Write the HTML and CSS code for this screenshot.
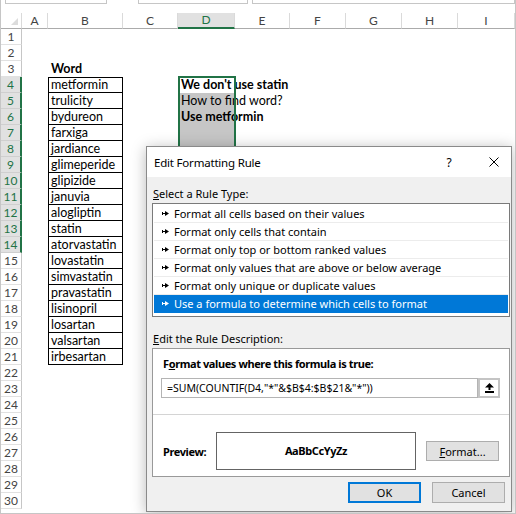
FILE: index.html
```html
<!DOCTYPE html>
<html lang="en">
  <head>
    <meta charset="UTF-8" />
    <meta name="viewport" content="width=device-width, initial-scale=1.0" />
    <link rel="stylesheet" href="styles.css">
  </head>
  <body>
    <div class="app">
      <div class="topbar">
        <div class="tb tb-1"></div>
        <div class="tb tb-2"></div>
        <div class="tb tb-3"></div>
      </div>
      <div class="sheet" id="sheet"></div>

      <!-- current selection D4:D14 -->
      <div class="selection"></div>

      <div class="dialog">
        <div class="titlebar">
          <span class="title">Edit Formatting Rule</span>
          <span class="help">?</span>
          <svg class="close" width="10" height="10" viewBox="0 0 10 10">
            <path d="M0.5 0.5L9.5 9.5M9.5 0.5L0.5 9.5" stroke="#000" stroke-width="1" fill="none" />
          </svg>
        </div>
        <div class="dlg-body">
          <div class="label"><u>S</u>elect a Rule Type:</div>
          <ul class="rule-list">
            <li><svg class="arr" width="7" height="5" viewBox="0 0 7 5"><rect x="0" y="1" width="1" height="3" /><rect x="0" y="2" width="3" height="1" /><polygon points="3,0 7,2.5 3,5" /></svg>Format all cells based on their values</li>
            <li><svg class="arr" width="7" height="5" viewBox="0 0 7 5"><rect x="0" y="1" width="1" height="3" /><rect x="0" y="2" width="3" height="1" /><polygon points="3,0 7,2.5 3,5" /></svg>Format only cells that contain</li>
            <li><svg class="arr" width="7" height="5" viewBox="0 0 7 5"><rect x="0" y="1" width="1" height="3" /><rect x="0" y="2" width="3" height="1" /><polygon points="3,0 7,2.5 3,5" /></svg>Format only top or bottom ranked values</li>
            <li><svg class="arr" width="7" height="5" viewBox="0 0 7 5"><rect x="0" y="1" width="1" height="3" /><rect x="0" y="2" width="3" height="1" /><polygon points="3,0 7,2.5 3,5" /></svg>Format only values that are above or below average</li>
            <li><svg class="arr" width="7" height="5" viewBox="0 0 7 5"><rect x="0" y="1" width="1" height="3" /><rect x="0" y="2" width="3" height="1" /><polygon points="3,0 7,2.5 3,5" /></svg>Format only unique or duplicate values</li>
            <li class="active"><svg class="arr" width="7" height="5" viewBox="0 0 7 5"><rect x="0" y="1" width="1" height="3" /><rect x="0" y="2" width="3" height="1" /><polygon points="3,0 7,2.5 3,5" /></svg>Use a formula to determine which cells to format</li>
          </ul>
          <div class="label label-desc"><u>E</u>dit the Rule Description:</div>
          <div class="desc">
            <div class="desc-title">F<u>o</u>rmat values where this formula is true:</div>
            <div class="formula-row">
              <div class="formula">=SUM(COUNTIF(D4,"*"&amp;$B$4:$B$21&amp;"*"))</div>
              <div class="collapse">
                <svg width="9" height="10" viewBox="0 0 9 10">
                  <polygon points="4.5,0 9,4.5 5.5,4.5 5.5,7 3.5,7 3.5,4.5 0,4.5" fill="#000" />
                  <rect x="0" y="8" width="9" height="2" fill="#000" />
                </svg>
              </div>
            </div>
            <div class="sep"></div>
            <div class="preview-row">
              <span class="preview-label">Preview:</span>
              <div class="preview-box">AaBbCcYyZz</div>
              <button class="btn"><u>F</u>ormat...</button>
            </div>
          </div>
          <div class="actions">
            <button class="btn btn-ok">OK</button>
            <button class="btn">Cancel</button>
          </div>
        </div>
      </div>
    </div>

    <script>
      const words = [
        "metformin", "trulicity", "bydureon", "farxiga", "jardiance",
        "glimeperide", "glipizide", "januvia", "alogliptin", "statin",
        "atorvastatin", "lovastatin", "simvastatin", "pravastatin",
        "lisinopril", "losartan", "valsartan", "irbesartan"
      ];
      const cols = ["A", "B", "C", "D", "E", "F", "G", "H", "I"];
      const sheet = document.getElementById("sheet");

      function add(cls, text) {
        const el = document.createElement("div");
        el.className = cls;
        if (text) el.textContent = text;
        sheet.appendChild(el);
        return el;
      }

      // column headers
      add("corner").appendChild(document.createElement("span"));
      cols.forEach((c) => add(c === "D" ? "ch on" : "ch", c));

      for (let r = 1; r <= 30; r++) {
        const selRow = r >= 4 && r <= 14;
        add(selRow ? "rh on" : "rh", String(r));

        cols.forEach((c) => {
          let cls = "cell";
          let text = "";
          if (c === "B" && r === 3) {
            cls += " b";
            text = "Word";
          }
          if (c === "B" && r >= 4 && r <= 21) {
            cls += r === 4 ? " box first" : " box";
            text = words[r - 4];
          }
          if (c === "D") {
            if (r >= 5 && r <= 14) cls += " hl";
            if (r === 4) { cls += " b"; text = "We don't use statin"; }
            if (r === 5) text = "How to find word?";
            if (r === 6) { cls += " b"; text = "Use metformin"; }
          }
          add(cls, text);
        });
      }
    </script>
  </body>
</html>
```

FILE: styles.css
```css
body {
  margin: 0;
}

.app {
  position: relative;
  width: 516px;
  height: 514px;
  overflow: hidden;
  box-sizing: border-box;
  background: #fff;
  border-left: 1px solid #c6c6c6;
  border-right: 1px solid #c6c6c6;
  border-bottom: 1px solid #c6c6c6;
  font-family: Lato, "Liberation Sans", sans-serif;
}

/* strip left over from the formula bar */
.topbar {
  display: flex;
  height: 13px;
  padding-left: 4px;
}

.tb {
  height: 3px;
  border: 1px solid #c6c6c6;
  border-top: none;
}

.tb-1 { width: 100px; }
.tb-2 { width: 108px; margin-left: 31px; }
.tb-3 { flex: 1; margin-left: 4px; }

/* worksheet grid */
.sheet {
  display: grid;
  grid-template-columns: 21px 26px 75px 55px 57px 55px 56px 56px 56px 57px;
  grid-auto-rows: 16px;
}

.corner,
.ch {
  box-sizing: border-box;
  border-right: 1px solid #dadada;
  border-bottom: 1px solid #ababab;
}

.corner {
  display: flex;
  justify-content: flex-end;
  align-items: flex-end;
  padding: 0 3px 3px 0;
}

.corner span {
  width: 0;
  height: 0;
  border-left: 7px solid transparent;
  border-bottom: 7px solid #dcdcdc;
}

.ch {
  font-size: 12px;
  line-height: 15px;
  color: #444;
  text-align: center;
}

.ch.on {
  background: #e1e1e1;
  color: #217346;
  border-bottom: 2px solid #217346;
  line-height: 14px;
}

.rh {
  box-sizing: border-box;
  border-right: 1px solid #c6c6c6;
  border-bottom: 1px solid #e1e1e1;
  font-size: 12px;
  line-height: 15px;
  color: #444;
  text-align: center;
}

.rh.on {
  background: #e1e1e1;
  color: #217346;
  border-right: 2px solid #217346;
  border-bottom-color: #cfcfcf;
}

.cell {
  box-sizing: border-box;
  padding-left: 3px;
  font-size: 12.5px;
  line-height: 16px;
  color: #000;
  white-space: nowrap;
  overflow: visible;
}

.cell.b {
  font-weight: bold;
}

.cell.box {
  padding-left: 2px;
  border: 1px solid #000;
  border-top: none;
  line-height: 15px;
}

.cell.box.first {
  border-top: 1px solid #000;
  line-height: 14px;
}

.cell.hl {
  background: #c6c6c6;
}

.selection {
  position: absolute;
  left: 177px;
  top: 76px;
  width: 58px;
  height: 178px;
  border: 2px solid #217346;
  box-sizing: border-box;
  pointer-events: none;
}

/* dialog */
.dialog {
  position: absolute;
  left: 145px;
  top: 146px;
  width: 366px;
  height: 366px;
  box-sizing: border-box;
  border: 1px solid #8a8a8a;
  background: #f0f0f0;
  box-shadow: 0 2px 14px rgba(0, 0, 0, 0.28);
  font-family: "Noto Sans", "Liberation Sans", sans-serif;
  font-size: 11px;
  color: #000;
}

.titlebar {
  display: flex;
  align-items: center;
  height: 30px;
  padding: 0 12px 0 7px;
  background: #fff;
}

.title {
  flex: 1;
  font-size: 11.5px;
  letter-spacing: -0.2px;
}

.help {
  width: 16px;
  margin-right: 32px;
  font-size: 12px;
  text-align: center;
}

.dlg-body {
  padding: 9px 1px 0 5px;
}

.label {
  padding-left: 1px;
  line-height: 16px;
}

.label-desc {
  margin-top: 14px;
}

.rule-list {
  list-style: none;
  margin: 1px 0 0;
  padding: 1px 1px 3px;
  border: 1px solid #7a7a7a;
  background: #fff;
}

.rule-list li {
  display: flex;
  align-items: center;
  gap: 5px;
  height: 17px;
  padding-left: 8px;
  border-bottom: 1px solid #ececec;
  white-space: nowrap;
}

.rule-list li.active {
  background: #0078d7;
  color: #fff;
  border-bottom-color: #0078d7;
}

.arr {
  fill: currentColor;
  flex: none;
}

.desc {
  margin-top: 1px;
  padding: 7px 9px 6px 8px;
  border: 1px solid #999;
  background: #fff;
}

.desc-title {
  padding-left: 2px;
  line-height: 16px;
  font-weight: bold;
  letter-spacing: -0.4px;
}

.formula-row {
  display: flex;
  margin-top: 6px;
  height: 20px;
}

.formula {
  flex: 1;
  box-sizing: border-box;
  padding-left: 5px;
  border: 1px solid #b4b4b4;
  font-size: 10.5px;
  line-height: 18px;
  white-space: nowrap;
}

.collapse {
  display: flex;
  align-items: center;
  justify-content: center;
  width: 22px;
  box-sizing: border-box;
  border: 2px solid #c4c4c4;
  background: #fff;
}

.sep {
  margin: 16px -9px 0 -8px;
  border-top: 1px solid #d4d4d4;
}

.preview-row {
  display: flex;
  align-items: center;
  margin-top: 17px;
}

.preview-label {
  width: 53px;
  padding-left: 2px;
  font-weight: bold;
  letter-spacing: -0.4px;
}

.preview-box {
  width: 200px;
  height: 38px;
  box-sizing: border-box;
  border: 1px solid #646464;
  font-weight: bold;
  letter-spacing: -0.4px;
  line-height: 36px;
  text-align: center;
}

.btn {
  width: 73px;
  height: 20px;
  padding: 0;
  margin-left: 10px;
  box-sizing: border-box;
  border: 1px solid #adadad;
  background: #e1e1e1;
  font-family: "Noto Sans", "Liberation Sans", sans-serif;
  font-size: 11px;
  color: #000;
}

.actions {
  display: flex;
  justify-content: flex-end;
  gap: 11px;
  margin-top: 5px;
  padding-right: 5px;
}

.actions .btn {
  height: 21px;
  margin-left: 0;
}

.btn-ok {
  border: 2px solid #0078d7;
}
```
